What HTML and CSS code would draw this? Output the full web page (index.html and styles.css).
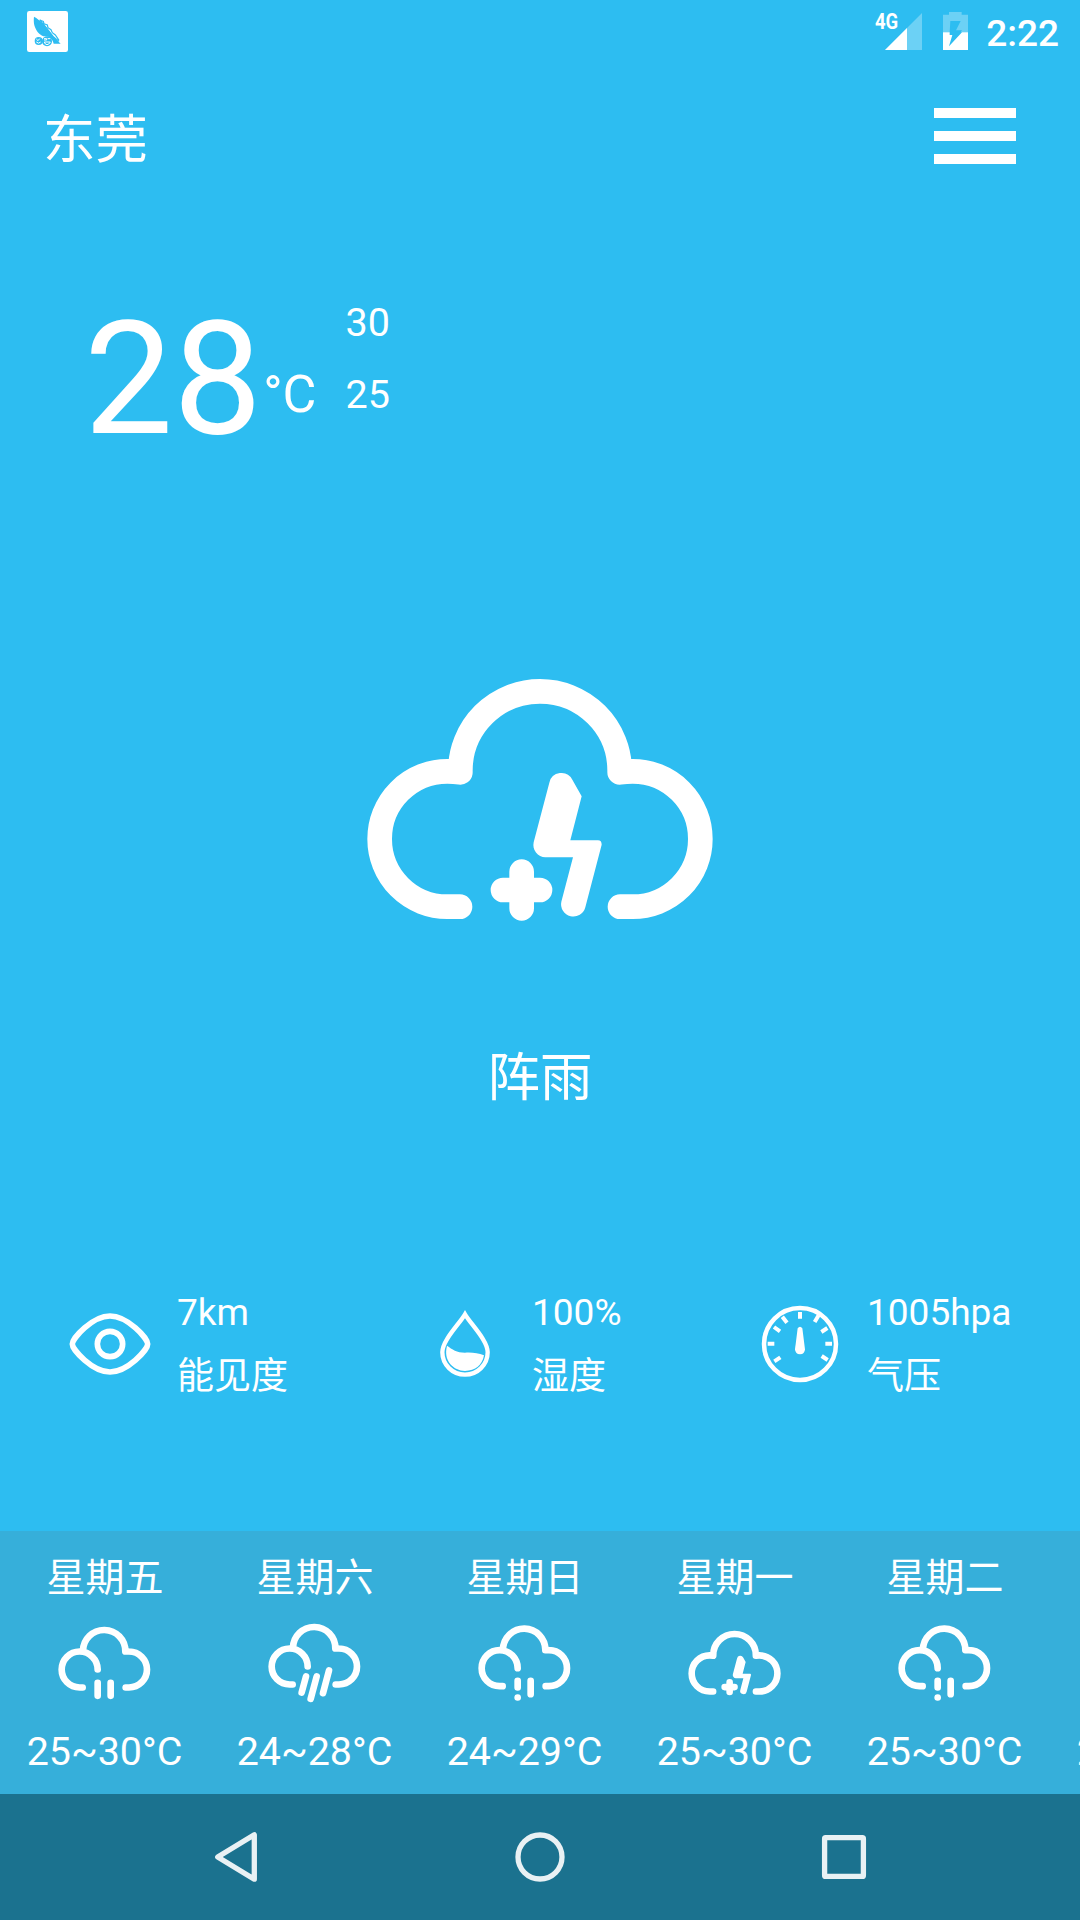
FILE: index.html
```html
<!DOCTYPE html>
<html lang="zh-CN">
<head>
<meta charset="utf-8">
<title>东莞天气</title>
<link rel="stylesheet" href="styles.css">
</head>
<body>
<svg class="defs" width="0" height="0" aria-hidden="true">
  <symbol id="storm" viewBox="0 0 1140 900">
    <g fill="none" stroke="#fff" stroke-width="74" stroke-linecap="round" stroke-linejoin="round">
      <path d="M330 740H292A203 203 0 0 1 292 334Q312 334 331 337V332A239 238 0 0 1 809 332V337Q829 334 848 334A203 203 0 0 1 848 740H810"/>
      <path d="M515 635V745M459 690H570"/>
    </g>
    <path fill="#fff" d="M598 368L551 547A37 37 0 0 0 586 592H669L634 725A37 37 0 0 0 706 742L755 554Q755 541 744 541H661L695 409L667 359A37 37 0 0 0 598 368Z"/>
  </symbol>
  <symbol id="cloud" viewBox="0 0 300 240">
    <path fill="none" stroke="#fff" stroke-width="20" stroke-linecap="round" stroke-linejoin="round" d="M86 193.500H77A54 54 0 0 1 77 85.500A54 54 0 0 1 131 139.500M87 83.500A63.500 63.500 0 0 1 214 85.500Q219 85 225 85.500A54 54 0 0 1 225 193.500H215"/>
  </symbol>
  <symbol id="rain" viewBox="0 0 300 240">
    <use href="#cloud" width="300" height="240"/>
    <path fill="none" stroke="#fff" stroke-width="20" stroke-linecap="round" d="M131 179.500V218.500M170 179.500V218.500"/>
  </symbol>
  <symbol id="heavy" viewBox="0 0 300 240">
    <use href="#cloud" y="-9" width="300" height="240"/>
    <path fill="none" stroke="#fff" stroke-width="20" stroke-linecap="round" d="M126 160.500L113 208.500M158 160.500L140 227.500M195 142.500L177 210.500"/>
  </symbol>
  <symbol id="drizzle" viewBox="0 0 300 240">
    <use href="#cloud" y="-4" width="300" height="240"/>
    <path fill="none" stroke="#fff" stroke-width="20" stroke-linecap="round" d="M131 173.500V193.500M131 223.500V223.600M170 173.500V213.500"/>
  </symbol>
</svg>

<div class="screen">
  <div class="status">
    <svg class="app-icon" viewBox="0 0 123 123">
      <rect width="123" height="123" rx="7" fill="#fff"/>
      <path fill="#2dbcf2" d="M21 17C30 22 39 29 47 37L66 60L84 82L101 98L80 98C77 84 65 73 49 76C36 70 27 60 22 43C20 34 20 25 21 17Z"/>
      <path fill="none" stroke="#2dbcf2" stroke-width="3.500" d="M38 27L49 31L51 38L61 42L63 50L72 56L76 65L85 72L96 88M38 27L58 50L78 76L96 91"/>
      <circle cx="35" cy="90" r="12" fill="#2dbcf2"/>
      <circle cx="60" cy="91" r="15" fill="#2dbcf2"/>
      <path fill="none" stroke="#fff" stroke-width="3" d="M28 84L33 89L38 83M28 93Q35 100 41 93M51 83H59V87H51M62 83H70M52 93H70Q66 101 60 101Q54 101 52 93"/>
    </svg>
    <div class="status-right">
      <span class="net">4G</span>
      <svg class="signal" viewBox="0 0 37 37"><path d="M37 0V37H0Z" fill="#fff" fill-opacity=".3"/><path d="M22 15V37H0Z" fill="#fff"/></svg>
      <svg class="battery" viewBox="0 0 75 114">
        <path d="M18 0H56V8H75V61H53L57 55H39L53 27H22L20 61H0V8H18Z" fill="#fff" fill-opacity=".3"/>
        <path d="M0 61H20V69H28L18 103L57 61H75V114H0Z" fill="#fff"/>
      </svg>
      <span class="clock">2:22</span>
    </div>
  </div>

  <header class="header">
    <h1 class="city">东莞</h1>
    <div class="menu"><i></i><i></i><i></i></div>
  </header>

  <section class="now">
    <span class="temp">28</span><span class="unit">°C</span>
    <div class="range"><span>30</span><span>25</span></div>
  </section>

  <section class="sky">
    <svg class="sky-icon"><use href="#storm"/></svg>
    <p class="sky-name">阵雨</p>
  </section>

  <section class="metrics">
    <div class="metric">
      <svg class="metric-icon" viewBox="0 0 252 252" fill="none" stroke="#fff" stroke-width="17">
        <path d="M13 126C13 109 73 42 126 42S239 109 239 126S179 210 126 210S13 143 13 126Z"/><circle cx="126" cy="126" r="38"/>
      </svg>
      <div class="metric-text"><p>7km</p><p>能见度</p></div>
    </div>
    <div class="metric">
      <svg class="metric-icon" viewBox="0 0 252 252">
        <path fill="none" stroke="#fff" stroke-width="13" d="M126 37C108 67 58 115 58 151A68 67 0 0 0 194 151C194 115 144 67 126 37Z"/>
        <path fill="#fff" d="M72 131C88 142 101 152 126 152C149 151 165 153 183 160C178 190 157 206 126 207C91 206 65 178 70 142Z"/>
      </svg>
      <div class="metric-text"><p>100%</p><p>湿度</p></div>
    </div>
    <div class="metric">
      <svg class="metric-icon" viewBox="0 0 252 252">
        <g fill="none" stroke="#fff" stroke-width="12"><circle cx="126" cy="126" r="108" stroke-width="13.500"/>
        <path d="M126 30V50M29 125H49M202 125H222M48 75L66 88M73 44L87 62M182 40L170 60M208 78L190 90M49 178L67 166M209 174L191 162"/></g>
        <path fill="#fff" d="M119 79Q126 69 133 79L141 142Q140 157 126 157T111 142Z"/>
      </svg>
      <div class="metric-text"><p>1005hpa</p><p>气压</p></div>
    </div>
  </section>

  <section class="forecast">
    <div class="day"><p>星期五</p><svg class="day-icon"><use href="#rain"/></svg><p class="day-range">25~30°C</p></div>
    <div class="day"><p>星期六</p><svg class="day-icon"><use href="#heavy"/></svg><p class="day-range">24~28°C</p></div>
    <div class="day"><p>星期日</p><svg class="day-icon"><use href="#drizzle"/></svg><p class="day-range">24~29°C</p></div>
    <div class="day"><p>星期一</p><svg class="day-icon" viewBox="3 -29 1122 897"><use href="#storm" width="1140" height="900"/></svg><p class="day-range">25~30°C</p></div>
    <div class="day"><p>星期二</p><svg class="day-icon"><use href="#drizzle"/></svg><p class="day-range">25~30°C</p></div>
    <div class="day"><p>星期三</p><svg class="day-icon"><use href="#rain"/></svg><p class="day-range">25~30°C</p></div>
  </section>

  <nav class="nav">
    <svg viewBox="0 0 60 60"><path d="M11.700 30L48.300 7.800V52.200Z"/></svg>
    <svg viewBox="0 0 60 60"><circle cx="30" cy="30" r="22"/></svg>
    <svg viewBox="0 0 60 60"><rect x="10.600" y="10.600" width="38.800" height="38.800" rx="1"/></svg>
  </nav>
</div>
</body>
</html>
```

FILE: styles.css
```css
* { box-sizing: border-box; margin: 0; padding: 0; }

body {
  width: 1080px;
  height: 1920px;
  overflow: hidden;
  background: #2dbdf1;
  color: #fff;
  font-family: Roboto, "Noto Sans CJK SC", sans-serif;
}

svg { display: block; }
.defs { position: absolute; }

.screen {
  display: flex;
  flex-direction: column;
  width: 1080px;
  height: 1920px;
  overflow: hidden;
}

.status {
  display: flex;
  justify-content: space-between;
  height: 72px;
  padding: 11px 21px 0 27px;
}
.app-icon { width: 41px; height: 41px; }
.status-right { display: flex; }
.net {
  width: 23px;
  margin: 0 -13px 0 0;
  font-size: 22px;
  line-height: 22px;
  font-weight: 700;
  transform: scaleX(.84);
  transform-origin: 0 0;
}
.signal { width: 37px; height: 37px; margin: 2px 21px 0 0; }
.battery { width: 25px; height: 38px; margin: 1px 18px 0 0; }
.clock { font-size: 37px; line-height: 46px; font-weight: 500; }

.header {
  display: flex;
  justify-content: space-between;
  height: 128px;
  padding: 36px 64px 0 43px;
}
.city { font-size: 52.5px; line-height: 64px; font-weight: 400; }
.menu { display: flex; flex-direction: column; gap: 13.5px; width: 82.5px; }
.menu i { height: 9.5px; background: #fff; }

.now { display: flex; height: 460px; padding: 84px 0 0 84px; }
.temp { font-size: 158.5px; line-height: 190px; }
.unit { font-size: 52px; line-height: 62px; padding: 80px 0 0 1px; }
.range {
  display: flex;
  flex-direction: column;
  margin: 3px 0 0 29px;
  font-size: 39.5px;
  line-height: 72px;
}

.sky { display: flex; flex-direction: column; align-items: center; height: 620px; }
.sky-icon { width: 380px; height: 300px; }
.sky-name { margin-top: 87px; font-size: 52.5px; line-height: 62px; }

.metrics {
  display: grid;
  grid-template-columns: 355px 335px auto;
  height: 251px;
  padding-left: 68px;
}
.metric { display: flex; gap: 25px; font-size: 37px; line-height: 64px; }
.metric-icon { width: 84px; height: 84px; margin-top: 22px; }
.metric-text { padding-top: 1px; }

.forecast {
  display: flex;
  height: 263px;
  overflow: hidden;
  background: #36afda;
}
.day {
  display: flex;
  flex: 0 0 210px;
  flex-direction: column;
  align-items: center;
  padding-top: 23px;
  font-size: 39px;
  line-height: 48px;
}
.day-icon { width: 100px; height: 80px; margin: 21px 2px 25px 0; }
.day-range { padding-right: 1px; font-size: 39.4px; }

.nav {
  display: flex;
  justify-content: space-between;
  height: 126px;
  padding: 33px 206px 0;
  background: #1b728f;
}
.nav svg { width: 60px; height: 60px; fill: none; stroke: #e9f1f4; stroke-width: 5.300; stroke-linejoin: round; }
```
